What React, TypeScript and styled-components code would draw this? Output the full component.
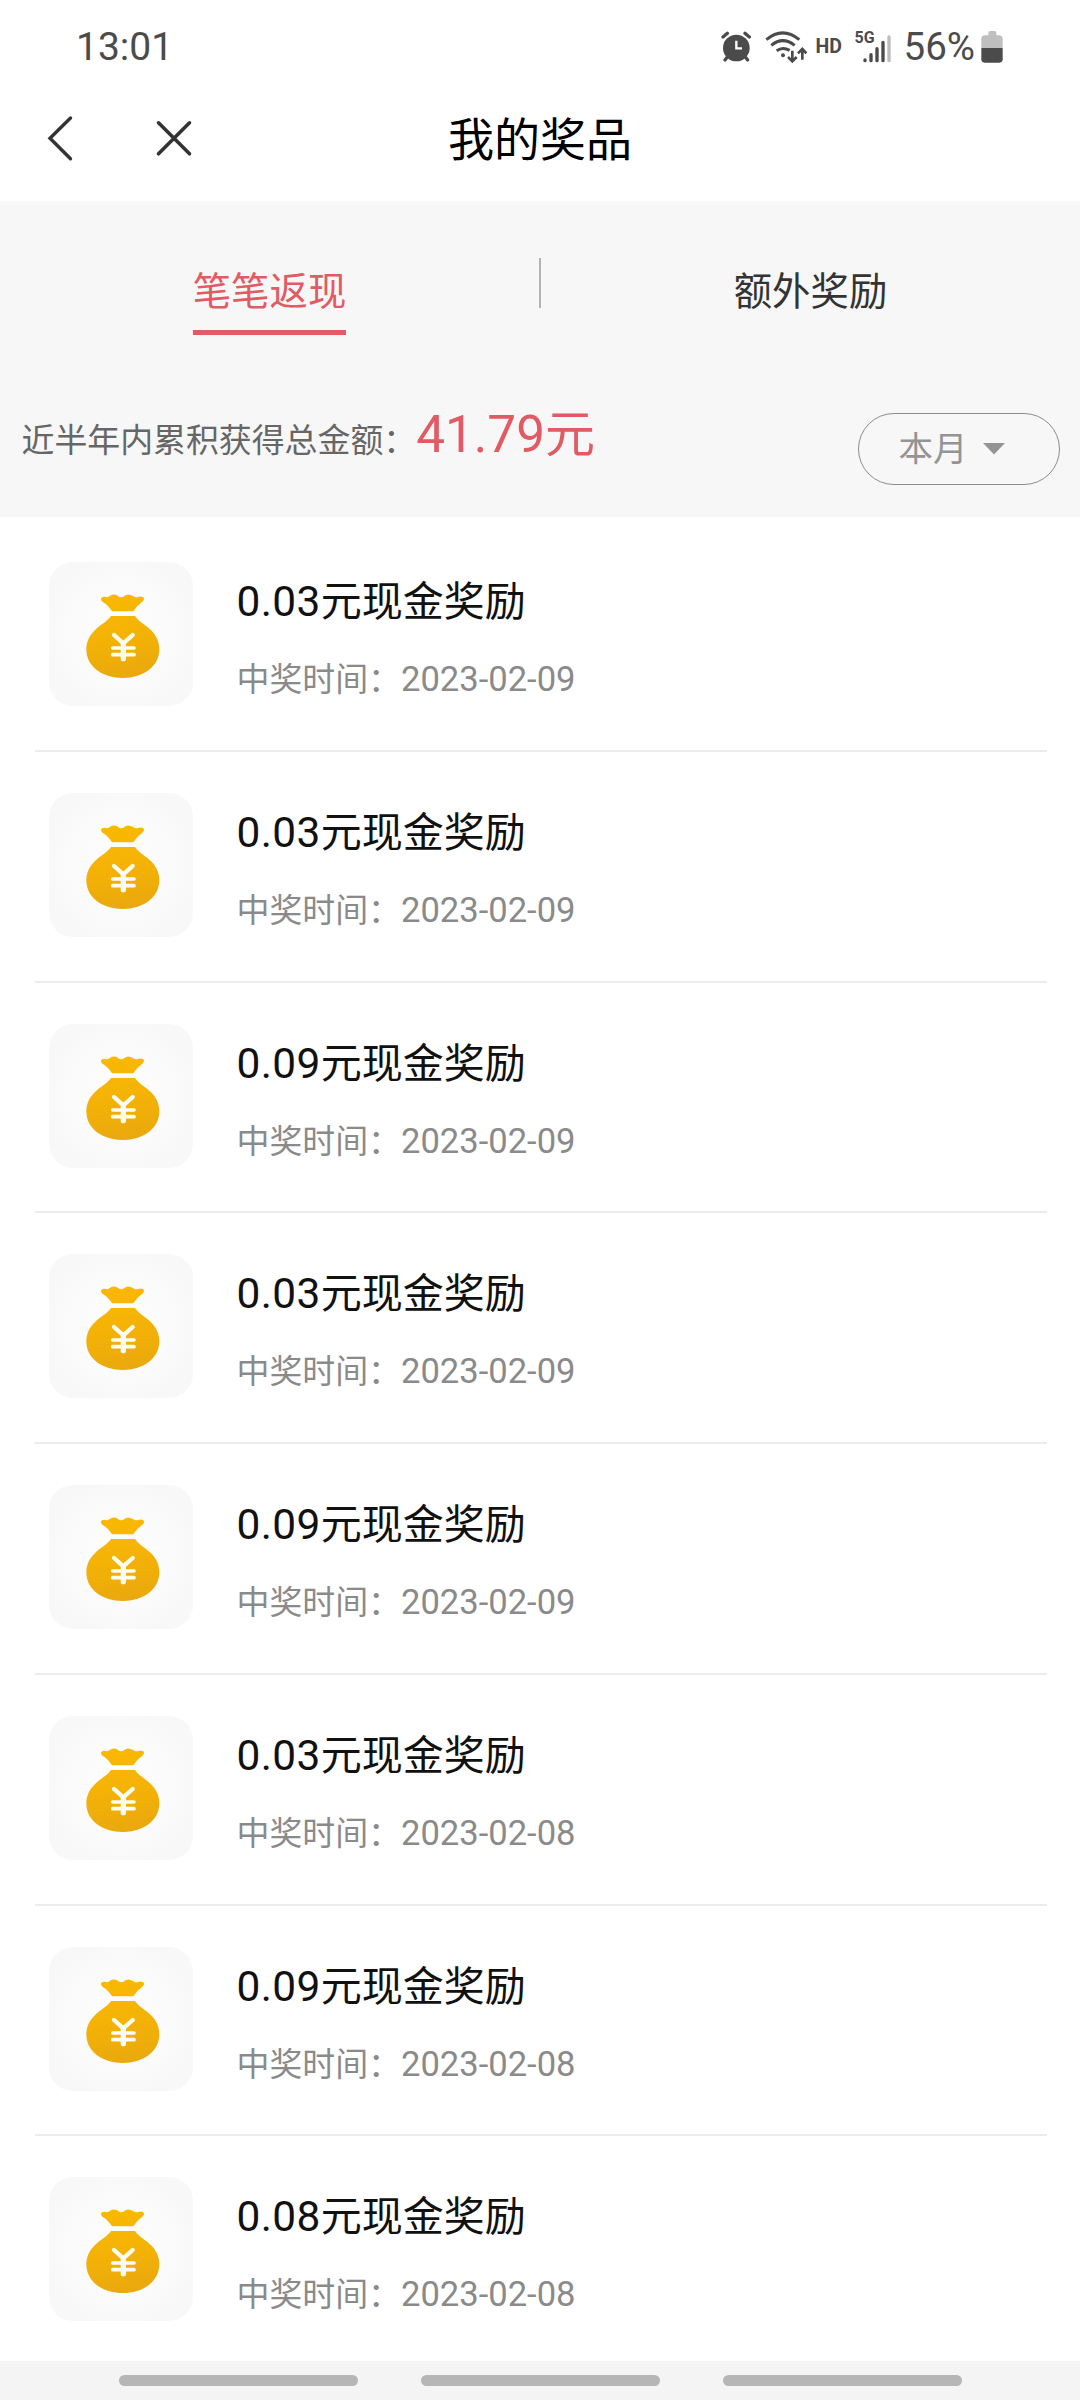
import React from 'react';
import styled, { createGlobalStyle } from 'styled-components';

const GlobalStyle = createGlobalStyle`
  * { box-sizing: border-box; }
  body { margin: 0; background: #fff; }
`;

const Screen = styled.div`
  width: 1080px;
  height: 2400px;
  display: flex;
  flex-direction: column;
  overflow: hidden;
  background: #fff;
  font-family: Roboto, 'Noto Sans CJK SC', sans-serif;
  color: #111;
`;

const StatusBar = styled.header`
  height: 92px;
  flex: none;
  display: flex;
  align-items: center;
  justify-content: space-between;
  padding: 2px 77px 0 76px;
  color: #4b4b4b;
`;

const Clock = styled.span`
  font-size: 39px;
  line-height: 46px;
`;

const StatusIcons = styled.div`
  display: flex;
  align-items: center;
  height: 46px;
  svg { display: block; flex: none; }
`;

const AlarmSlot = styled.span`
  margin-right: 13.5px;
`;

const HdMark = styled.span`
  margin: 0 0 0 9px;
  width: 28px;
  font-size: 19.5px;
  line-height: 22px;
  font-weight: 700;
`;

const Network = styled.div`
  display: flex;
  align-items: flex-start;
  height: 32px;
  margin-left: 11px;
`;

const NetworkLabel = styled.span`
  width: 8px;
  font-size: 16px;
  line-height: 14px;
  font-weight: 700;
  white-space: nowrap;
`;

const Percent = styled.span`
  margin: 0 6px 0 13px;
  font-size: 38.5px;
  line-height: 46px;
`;

const TitleBar = styled.nav`
  height: 109px;
  flex: none;
  display: grid;
  grid-template-columns: 1fr auto 1fr;
  align-items: start;
  padding: 16px 46px 0;
`;

const NavButtons = styled.div`
  display: flex;
  padding-top: 6px;
  gap: 79.5px;
  svg { display: block; }
`;

const Title = styled.h1`
  margin: 0;
  font-size: 46px;
  line-height: 64px;
  font-weight: 400;
  color: #000;
`;

const Panel = styled.section`
  flex: none;
  height: 316px;
  background: #f7f7f7;
  border-top: 4px solid #f9f9f9;
`;

const Tabs = styled.div`
  display: flex;
  align-items: flex-start;
  padding-top: 53px;
  height: 180px;
`;

const TabCell = styled.div`
  flex: 1;
  display: flex;
  justify-content: center;
`;

const TabLabel = styled.span<{ $active?: boolean }>`
  height: 77px;
  padding-top: 14px;
  font-size: 38.4px;
  line-height: 40px;
  color: ${(p) => (p.$active ? '#e15b64' : '#333')};
  border-bottom: 5px solid ${(p) => (p.$active ? '#e15b64' : 'transparent')};
`;

const TabDivider = styled.i`
  width: 2px;
  height: 50px;
  background: #b3b3b3;
`;

const Summary = styled.div`
  display: flex;
  justify-content: space-between;
  padding: 0 20px 0 21.5px;
`;

const SummaryText = styled.p`
  margin: 20px 0 0;
  display: flex;
  align-items: baseline;
  font-size: 32.9px;
  line-height: 60px;
  color: #666;
`;

const Amount = styled.strong`
  font-size: 51.3px;
  font-weight: 400;
  color: #e15b64;
`;

const AmountUnit = styled.span`
  font-size: 50px;
`;

const MonthButton = styled.button`
  width: 202px;
  height: 72px;
  margin-top: 28px;
  padding: 0 0 0 39.5px;
  display: flex;
  align-items: center;
  gap: 15.5px;
  border: 1px solid #8c8c8c;
  border-radius: 36px;
  background: transparent;
  font: 34.5px/40px Roboto, 'Noto Sans CJK SC', sans-serif;
  color: #949494;
`;

const List = styled.ul`
  flex: 1;
  min-height: 0;
  overflow: hidden;
  list-style: none;
  margin: 0;
  padding: 4px 33px 0 35px;
`;

const Row = styled.li`
  height: 230.77px;
  display: flex;
  padding: 41px 0 0 14px;
  border-bottom: 2px solid #ececec;
`;

const Thumb = styled.div`
  width: 144px;
  height: 144px;
  flex: none;
  border-radius: 24px;
  background: radial-gradient(circle, #fcfcfc 35%, #f8f8f8 75%);
  svg { display: block; }
`;

const RowText = styled.div`
  padding: 16px 0 0 43.5px;
`;

const RowTitle = styled.div`
  font-size: 41px;
  line-height: 48px;
  height: 48px;
  color: #111;
`;

const RowFigure = styled.span`
  font-size: 42.4px;
  letter-spacing: 0.4px;
`;

const RowDate = styled.div`
  margin-top: 31px;
  font-size: 32.9px;
  line-height: 44px;
  height: 44px;
  color: #8a8a8a;
`;

const DateFigure = styled.span`
  font-size: 34.6px;
`;

const BottomNav = styled.footer`
  height: 39px;
  flex: none;
  display: flex;
  justify-content: center;
  gap: 63px;
  padding-top: 14px;
  background: #f4f4f4;
`;

const NavPill = styled.i`
  width: 239px;
  height: 11px;
  border-radius: 6px;
  background: #b6b6b6;
`;

const AlarmIcon = () => (
  <svg width="30" height="32" viewBox="64 62 90 96" fill="none" stroke="#4b4b4b" strokeLinecap="round">
    <circle cx="110" cy="113" r="40" fill="#4b4b4b" stroke="none" />
    <path d="M70 80 83 69M149 80 136 69" strokeWidth="10" />
    <path d="m83 140-7 9M137 140l7 9" strokeWidth="10" />
    <path d="M110 91v23h17" stroke="#fff" strokeWidth="7" strokeLinecap="butt" />
  </svg>
);

const WifiIcon = () => (
  <svg width="42" height="32" viewBox="195 62 126 96" fill="none" stroke="#4b4b4b" strokeWidth="9">
    <path d="M199 88Q248 47 298 88" />
    <path d="M214 105Q248 77 284 105" />
    <path d="M230 121Q248 108 269 120" />
    <circle cx="249" cy="135" r="6" fill="#4b4b4b" stroke="none" />
    <path d="M277 121v31M264 140l13 13 13-13M307 148v-31M294 129l13-13 12 13" strokeWidth="8" />
  </svg>
);

const SignalIcon = () => (
  <svg width="28" height="32" viewBox="490 62 84 96" strokeWidth="10" strokeLinecap="round">
    <path d="M496 149v2M514 133v18M532 115v36M550 96v55" stroke="#4b4b4b" />
    <path d="M568 80v71" stroke="#bdbdbd" />
  </svg>
);

const BatteryIcon = () => (
  <svg width="22" height="32" viewBox="842 62 66 96">
    <path d="M864 75V68q0-6 6-6h12q6 0 6 6v7h8q11 0 11 11v28h-64V86q0-11 11-11z" fill="#bfbfbf" />
    <path d="M843 113h64v34q0 10-10 10h-44q-10 0-10-10z" fill="#4b4b4b" />
  </svg>
);

const BackIcon = () => (
  <svg width="28" height="48" viewBox="46 114 28 48" fill="none" stroke="#333" strokeWidth="3.4" strokeLinecap="round">
    <path d="M70.5 118 50 138.3 70.5 158.7" />
  </svg>
);

const CloseIcon = () => (
  <svg width="40" height="48" viewBox="154 114 40 48" fill="none" stroke="#333" strokeWidth="3.6" strokeLinecap="round">
    <path d="m158.500 122.800 31 31M189.500 122.800l-31 31" />
  </svg>
);

const Caret = () => (
  <svg width="22" height="12" viewBox="0 0 22 12">
    <path d="M0 0h22L11 11.500z" fill="#949494" />
  </svg>
);

const MoneyBag = () => (
  <svg width="144" height="144" viewBox="57 65 432 432">
    <defs>
      <linearGradient id="bag" gradientUnits="userSpaceOnUse" x1="260" y1="165" x2="300" y2="413">
        <stop offset="0" stopColor="#fab804" />
        <stop offset="0.5" stopColor="#f4b206" />
        <stop offset="1" stopColor="#e9a80e" />
      </linearGradient>
    </defs>
    <path
      d="M213 174Q217 167 227 170Q233 172 239 167Q250 160 260 164Q265 168 270 170Q276 172 282 168Q291 160 301 164Q308 166 314 170Q320 172 327 169Q338 167 342 173Q343 180 337 184Q322 194 310 213H246Q235 194 217 184Q212 179 213 174Z"
      fill="url(#bag)"
    />
    <path
      d="M243 227H315C324 241 343 252 358 265C377 281 388 302 388 327C388 380 338 413 279 413C218 413 169 380 169 327C169 302 180 282 199 265C214 252 234 241 243 227Z"
      fill="url(#bag)"
    />
    <g fill="none" stroke="#fffdf0" strokeLinecap="round">
      <path d="m252 284 28 25 28-25" strokeWidth="13" />
      <path d="M280 309v46" strokeWidth="16" />
      <path d="M248 323h64M248 343h64" strokeWidth="11" />
    </g>
  </svg>
);

const prizes = [
  { amount: '0.03', date: '2023-02-09' },
  { amount: '0.03', date: '2023-02-09' },
  { amount: '0.09', date: '2023-02-09' },
  { amount: '0.03', date: '2023-02-09' },
  { amount: '0.09', date: '2023-02-09' },
  { amount: '0.03', date: '2023-02-08' },
  { amount: '0.09', date: '2023-02-08' },
  { amount: '0.08', date: '2023-02-08' },
];

export default function App() {
  return (
    <Screen lang="zh-CN">
      <GlobalStyle />
      <StatusBar>
        <Clock>13:01</Clock>
        <StatusIcons>
          <AlarmSlot>
            <AlarmIcon />
          </AlarmSlot>
          <WifiIcon />
          <HdMark>HD</HdMark>
          <Network>
            <NetworkLabel>5G</NetworkLabel>
            <SignalIcon />
          </Network>
          <Percent>56%</Percent>
          <BatteryIcon />
        </StatusIcons>
      </StatusBar>
      <TitleBar>
        <NavButtons>
          <BackIcon />
          <CloseIcon />
        </NavButtons>
        <Title>我的奖品</Title>
      </TitleBar>
      <Panel>
        <Tabs>
          <TabCell>
            <TabLabel $active>笔笔返现</TabLabel>
          </TabCell>
          <TabDivider />
          <TabCell>
            <TabLabel>额外奖励</TabLabel>
          </TabCell>
        </Tabs>
        <Summary>
          <SummaryText>
            近半年内累积获得总金额：
            <Amount>
              41.79<AmountUnit>元</AmountUnit>
            </Amount>
          </SummaryText>
          <MonthButton>
            本月
            <Caret />
          </MonthButton>
        </Summary>
      </Panel>
      <List>
        {prizes.map((p, i) => (
          <Row key={i}>
            <Thumb>
              <MoneyBag />
            </Thumb>
            <RowText>
              <RowTitle>
                <RowFigure>{p.amount}</RowFigure>元现金奖励
              </RowTitle>
              <RowDate>
                中奖时间：<DateFigure>{p.date}</DateFigure>
              </RowDate>
            </RowText>
          </Row>
        ))}
      </List>
      <BottomNav>
        <NavPill />
        <NavPill />
        <NavPill />
      </BottomNav>
    </Screen>
  );
}
